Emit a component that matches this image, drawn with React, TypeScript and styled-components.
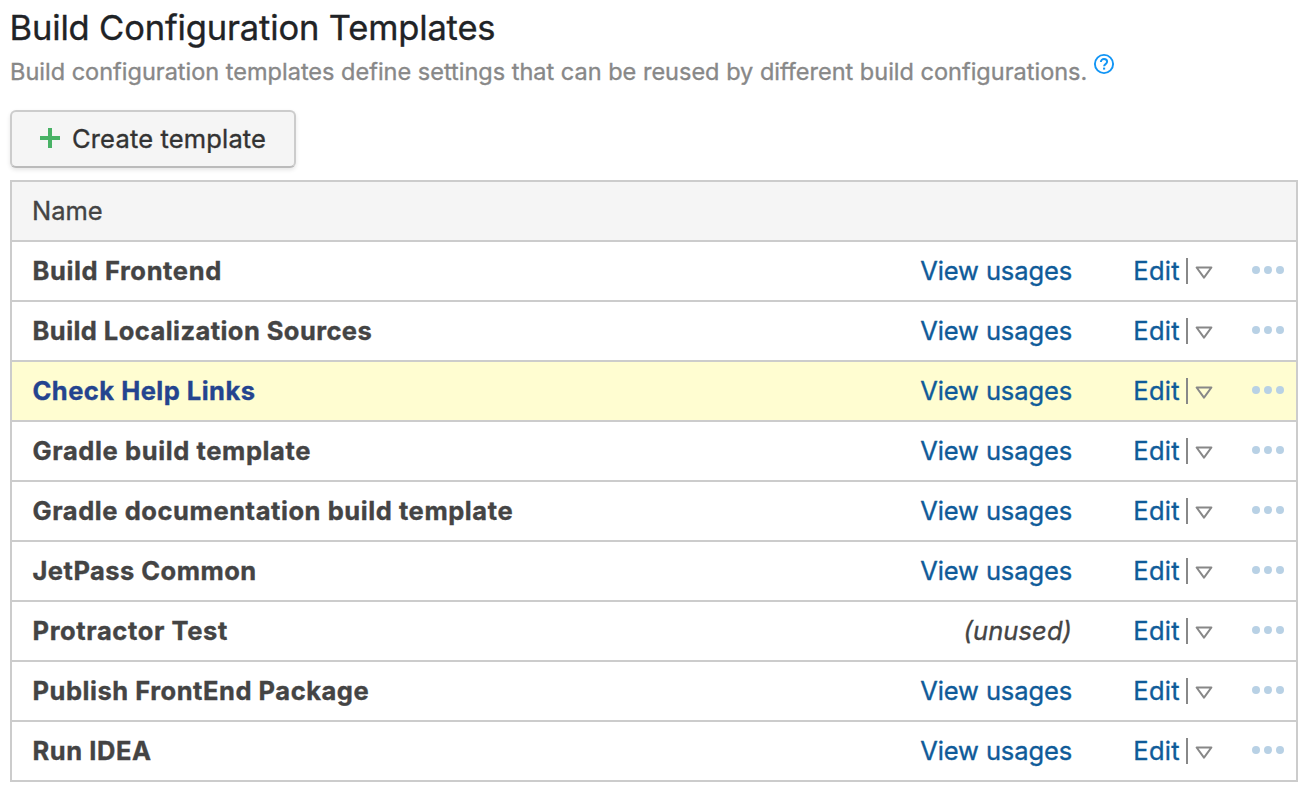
import React from "react";
import styled, { createGlobalStyle } from "styled-components";

const GlobalStyle = createGlobalStyle`
  *, *::before, *::after { box-sizing: border-box; }
  body {
    margin: 0;
    background: #fff;
    color: #444;
    font-family: Inter, "Liberation Sans", sans-serif;
    font-size: 25.5px;
    -webkit-text-stroke: 0.35px currentColor;
  }
`;

const Page = styled.main`
  display: flex;
  flex-direction: column;
  align-items: flex-start;
  padding: 6px 10px 0;
`;

const Title = styled.h1`
  margin: 0 0 0 -0.5px;
  height: 43px;
  font-size: 34.5px;
  line-height: 43px;
  font-weight: 400;
  letter-spacing: -0.15px;
  color: #1f2326;
  white-space: nowrap;
`;

const Description = styled.div`
  display: flex;
  align-items: flex-start;
  height: 46px;
  padding-top: 5px;
  margin-bottom: 15px;
  color: #888;
  font-size: 23.5px;
  line-height: 36px;
  letter-spacing: 0.005px;
  white-space: nowrap;
`;

const HelpLink = styled.a`
  display: flex;
  margin: -1px 0 0 5.5px;
`;

const CreateButton = styled.button`
  display: flex;
  align-items: center;
  gap: 12px;
  width: 286px;
  height: 58px;
  margin: 0 0 12px;
  padding: 0 0 2px 28px;
  border: 2px solid #ccc;
  border-bottom-color: #bbb;
  border-radius: 6px;
  background: #f5f5f5;
  box-shadow: 0 2px 4px rgba(0, 0, 0, 0.1);
  color: #333;
  font: inherit;
  letter-spacing: 0.16px;
  white-space: nowrap;
`;

const Table = styled.div`
  width: 1288px;
  border: 2px solid #ccc;
`;

const Row = styled.div<{ $active?: boolean }>`
  display: grid;
  grid-template-columns: 1fr 170px 116px 108px;
  align-items: center;
  height: 60px;
  border-bottom: 2px solid #ccc;
  background: ${(p) => (p.$active ? "#fffdd1" : "#fff")};
  white-space: nowrap;
  &:last-child {
    height: 58px;
    border-bottom: 0;
  }
`;

const HeaderRow = styled(Row)`
  background: #f5f5f5;
`;

const NameCell = styled.div<{ $bold?: boolean; $active?: boolean; $tracking?: number }>`
  padding: 0 0 2px ${(p) => (p.$bold ? 20.5 : 20)}px;
  font-weight: ${(p) => (p.$bold ? 700 : 400)};
  color: ${(p) => (p.$active ? "#24448f" : "#444")};
  letter-spacing: ${(p) => p.$tracking ?? 0}px;
`;

const UsageCell = styled.div`
  padding-bottom: 2px;
  text-align: right;
`;

const UsageLink = styled.a`
  color: #0f5b99;
  letter-spacing: -0.12px;
`;

const Unused = styled.em`
  letter-spacing: 0.1px;
`;

const EditCell = styled.div`
  display: flex;
  align-items: center;
  justify-content: flex-end;
`;

const EditLink = styled.a`
  padding-bottom: 2px;
  color: #0f5b99;
  letter-spacing: 0.3px;
`;

const Divider = styled.span`
  width: 2px;
  height: 26px;
  margin-left: 6px;
  background: #888;
`;

const MenuCell = styled.div`
  display: flex;
  align-items: center;
  justify-content: space-between;
  padding: 0 12px 0 7px;
`;

const Dots = styled.span`
  display: flex;
  gap: 4px;
  margin-bottom: 2px;
`;

const Dot = styled.i`
  width: 8px;
  height: 8px;
  border-radius: 50%;
  background: #b8d1e5;
`;

const Caret = styled.svg`
  margin-top: 3px;
`;

const templates = [
  { name: "Build Frontend", tracking: 0.62 },
  { name: "Build Localization Sources", tracking: 0.44 },
  { name: "Check Help Links", tracking: 0.48, active: true },
  { name: "Gradle build template", tracking: 0.61 },
  { name: "Gradle documentation build template", tracking: 0.57 },
  { name: "JetPass Common", tracking: 0.46 },
  { name: "Protractor Test", tracking: 0.62, unused: true },
  { name: "Publish FrontEnd Package", tracking: 0.53 },
  { name: "Run IDEA", tracking: 0.56 },
];

const PlusIcon = () => (
  <svg width="20" height="20" viewBox="0 0 20 20" shapeRendering="crispEdges">
    <path d="M10 0v20M0 10h20" stroke="#49b266" strokeWidth="4" />
  </svg>
);

const HelpIcon = () => (
  <svg width="22" height="22" viewBox="0 0 22 22" fill="none" stroke="#1295f5">
    <circle cx="11" cy="11" r="9.1" strokeWidth="1.9" />
    <path d="M7.9 9c0-1.8 1.3-2.9 3.1-2.9s3.1 1.1 3.1 2.7c0 2.3-3 2.3-3 4.5" strokeWidth="2" />
    <path d="M11.1 14.6v2" strokeWidth="2.1" />
  </svg>
);

const CaretIcon = () => (
  <Caret width="18" height="14" viewBox="0 0 18 14" fill="none">
    <path d="M1.6 1.5h14.8L9 11.7z" stroke="#888" strokeWidth="2" strokeLinejoin="round" />
  </Caret>
);

export default function App() {
  return (
    <>
      <GlobalStyle />
      <Page>
        <Title>Build Configuration Templates</Title>
        <Description>
          Build configuration templates define settings that can be reused by different build configurations.
          <HelpLink aria-label="Help">
            <HelpIcon />
          </HelpLink>
        </Description>
        <CreateButton>
          <PlusIcon />
          Create template
        </CreateButton>
        <Table>
          <HeaderRow>
            <NameCell>Name</NameCell>
          </HeaderRow>
          {templates.map((t) => (
            <Row key={t.name} $active={t.active}>
              <NameCell $bold $active={t.active} $tracking={t.tracking}>
                {t.name}
              </NameCell>
              <UsageCell>{t.unused ? <Unused>(unused)</Unused> : <UsageLink>View usages</UsageLink>}</UsageCell>
              <EditCell>
                <EditLink>Edit</EditLink>
                <Divider />
              </EditCell>
              <MenuCell>
                <CaretIcon />
                <Dots>
                  <Dot />
                  <Dot />
                  <Dot />
                </Dots>
              </MenuCell>
            </Row>
          ))}
        </Table>
      </Page>
    </>
  );
}
